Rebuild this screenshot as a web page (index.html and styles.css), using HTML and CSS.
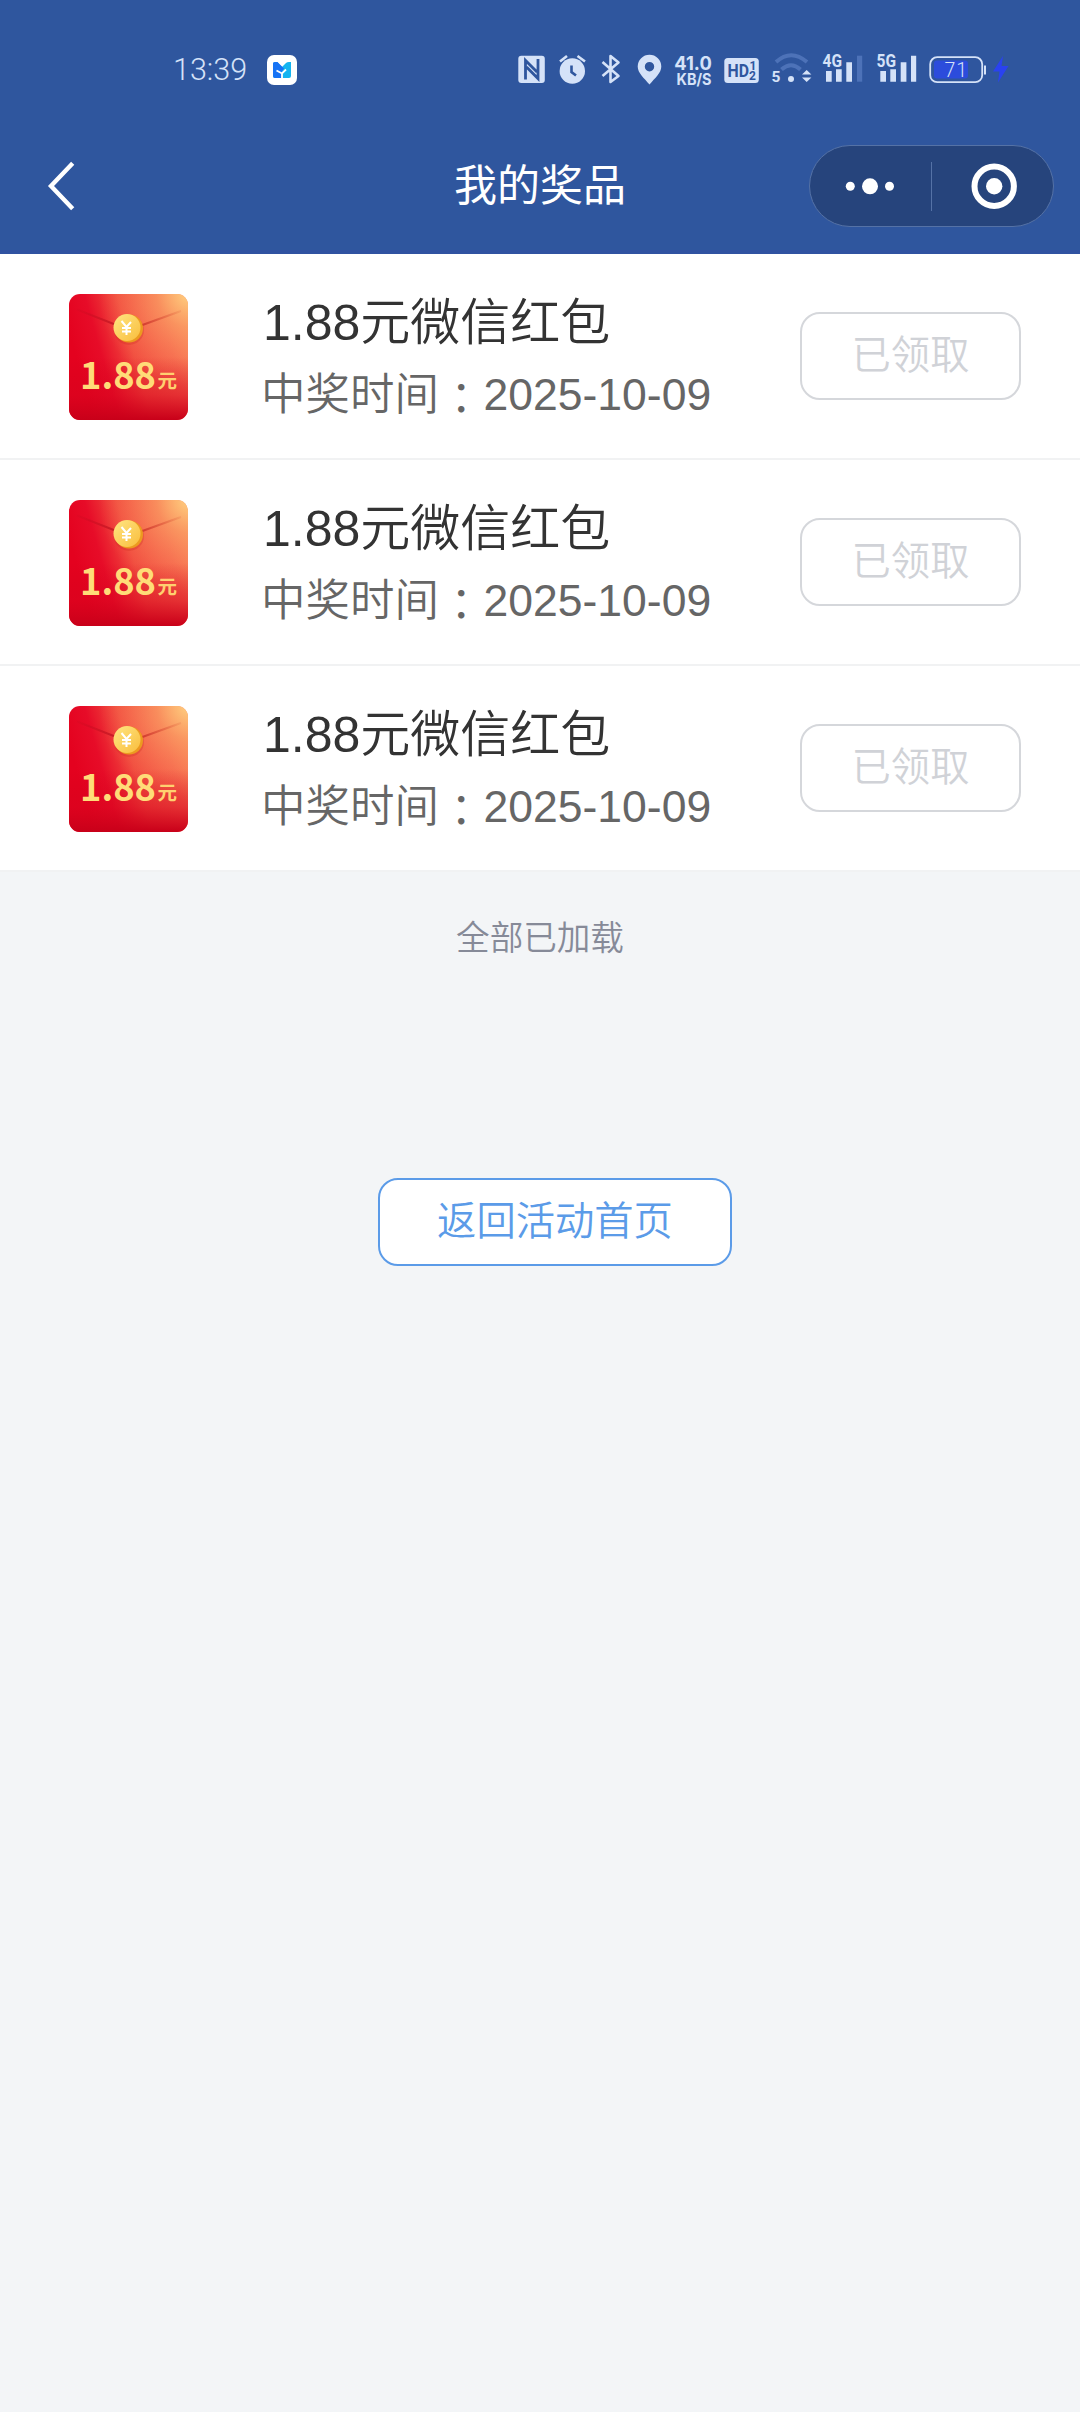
FILE: index.html
```html
<!DOCTYPE html>
<html lang="zh-CN">
<head>
<meta charset="utf-8">
<title>我的奖品</title>
<link rel="stylesheet" href="styles.css">
</head>
<body>
<svg width="0" height="0" class="defs" aria-hidden="true">
  <defs>
    <linearGradient id="paper" x1="0" y1="0.3" x2="1" y2="0">
      <stop offset="0" stop-color="#e4021f"/><stop offset="0.2" stop-color="#e70c28"/><stop offset="0.45" stop-color="#f04a3e"/><stop offset="0.75" stop-color="#f4604a"/><stop offset="1" stop-color="#f88458"/>
    </linearGradient>
    <radialGradient id="glow" cx="1" cy="0" r="0.75">
      <stop offset="0" stop-color="#ffcf80"/><stop offset="0.35" stop-color="#fdb26c" stop-opacity="0.55"/><stop offset="1" stop-color="#ff9060" stop-opacity="0"/>
    </radialGradient>
    <linearGradient id="base" x1="0" y1="0" x2="0" y2="1">
      <stop offset="0.5" stop-color="#d00018" stop-opacity="0"/><stop offset="0.8" stop-color="#d6031d" stop-opacity="0.5"/><stop offset="1" stop-color="#c80019"/>
    </linearGradient>
    <linearGradient id="foldL" x1="0" y1="0" x2="1" y2="0">
      <stop offset="0" stop-color="#b80c1c" stop-opacity="0.1"/><stop offset="1" stop-color="#b80c1c" stop-opacity="0.7"/>
    </linearGradient>
    <linearGradient id="foldR" x1="1" y1="0" x2="0" y2="0">
      <stop offset="0" stop-color="#d85030" stop-opacity="0.15"/><stop offset="1" stop-color="#c82c28" stop-opacity="0.8"/>
    </linearGradient>
    <linearGradient id="coin" x1="0" y1="0" x2="1" y2="1">
      <stop offset="0" stop-color="#ffe683"/><stop offset="1" stop-color="#f9bd3c"/>
    </linearGradient>
    <symbol id="envelope" viewBox="0 0 119 126">
      <rect width="119" height="126" rx="11" fill="url(#paper)"/>
      <rect width="119" height="126" rx="11" fill="url(#glow)"/>
      <rect width="119" height="126" rx="11" fill="url(#base)"/>
      <path d="M8 15.500 L46 30.500" fill="none" stroke="url(#foldL)" stroke-width="2"/>
      <path d="M112 17 L72 31.500" fill="none" stroke="url(#foldR)" stroke-width="2"/>
      <circle cx="60" cy="36" r="15" fill="#cc2e22" opacity="0.3"/>
      <circle cx="60" cy="34.500" r="14" fill="#ec9a20"/>
      <circle cx="58" cy="33.500" r="13.500" fill="url(#coin)"/>
      <path d="M52.500 27 L57.500 33 L62 28 M57.500 33 V41 M53 34 H62 M53 37.500 H62" fill="none" stroke="#fff" stroke-width="2"/>
      <text x="11" y="94.500" class="env-num" textLength="76" lengthAdjust="spacingAndGlyphs">1.88</text>
      <text x="88.500" y="93.500" class="env-unit">元</text>
    </symbol>
  </defs>
</svg>

<header class="header">
  <div class="status">
    <span class="clock">13:39</span>
    <svg class="app" width="30" height="30" viewBox="0 0 30 30">
      <rect width="30" height="30" rx="7" fill="#fff"/>
      <path d="M6 8.500 Q6 7 8 7 H10 L15 12 L19 8 Q20 7 22 7 H24 V21 Q24 23 22 23 H19 L15 23 H8 Q6 23 6 21 Z" fill="#14b4f0"/>
      <path d="M6 8.500 Q6 7 8 7 H10.500 L17 13.500 L14.500 17 V23 H8 Q6 23 6 21 Z" fill="#1673f5"/>
      <path d="M9.500 15.500 L15 18.500 L19 14.500 M15 18 V23.500" fill="none" stroke="#fff" stroke-width="1.800"/>
    </svg>
    <div class="icons">
      <svg width="38" height="40" viewBox="516 50 38 40">
        <rect x="518.300" y="55.700" width="26.500" height="27.300" rx="3" fill="#d5e2f8"/>
        <path d="M525.500 79.500 V60.500 L537 72 M526.500 67 L538 78.500 V59" fill="none" stroke="#2f569e" stroke-width="2.800"/>
      </svg>
      <svg width="42" height="40" viewBox="554 50 42 40">
        <circle cx="572.300" cy="71" r="12.700" fill="#d5e2f8"/>
        <path d="M560 61.500 L567 56 M577.500 56 L585 61.500" stroke="#d5e2f8" stroke-width="2.600"/>
        <path d="M571.500 65.500 V72 L576 75.500" fill="none" stroke="#2f569e" stroke-width="2.600"/>
      </svg>
      <svg width="36" height="40" viewBox="596 50 36 40">
        <path d="M602.500 62 L618.500 76 L610.500 82 V56 L618.500 62.500 L602.500 76" fill="none" stroke="#d5e2f8" stroke-width="2.600" stroke-linejoin="round"/>
      </svg>
      <svg width="38" height="40" viewBox="632 50 38 40">
        <path fill-rule="evenodd" d="M649.500 84.500 C644 78 637.700 73 637.700 66.500 A11.800 11.800 0 0 1 661.300 66.500 C661.300 73 655 78 649.500 84.500 Z M649.500 62 A4.700 4.700 0 1 0 649.500 71.400 A4.700 4.700 0 1 0 649.500 62 Z" fill="#d5e2f8"/>
      </svg>
      <svg width="48" height="40" viewBox="670 50 48 40">
        <text x="674.300" y="69.500" class="st st-speed" textLength="37.500" lengthAdjust="spacingAndGlyphs">41.0</text>
        <text x="676.500" y="85.300" class="st st-unit" textLength="35" lengthAdjust="spacingAndGlyphs">KB/S</text>
      </svg>
      <svg width="50" height="40" viewBox="718 50 50 40">
        <rect x="724.300" y="58" width="34.500" height="25" rx="3.500" fill="#d5e2f8"/>
        <text x="727.500" y="77.300" class="st st-hd" textLength="21.500" lengthAdjust="spacingAndGlyphs">HD</text>
        <text x="749.500" y="69.800" class="st st-sub">1</text>
        <text x="749" y="80" class="st st-sub">2</text>
      </svg>
      <svg width="50" height="40" viewBox="768 50 50 40">
        <g fill="none" stroke="#4d72b8" stroke-width="4">
          <path d="M776 62 Q791 48.500 807 62"/>
          <path d="M781.500 69.500 Q791 61 800.500 69.500"/>
        </g>
        <text x="771.500" y="82" class="st st-five">5</text>
        <circle cx="791" cy="79" r="3" fill="#d5e2f8"/>
        <path d="M802 74.500 L806.700 70 L811.400 74.500 Z M802 77.500 H811.400 L806.700 82 Z" fill="#d5e2f8"/>
      </svg>
      <svg width="52" height="40" viewBox="818 50 52 40">
        <path d="M826 71 h5.700 v10.700 h-5.700 Z M836 69.300 h5.700 v12.400 h-5.700 Z M846.300 62.300 h5.700 v19.400 h-5.700 Z" fill="#d5e2f8"/>
        <path d="M857 55.700 h5.200 v26 h-5.200 Z" fill="#4d72b8"/>
        <text x="822.500" y="67.300" class="st st-net" textLength="19.500" lengthAdjust="spacingAndGlyphs">4G</text>
      </svg>
      <svg width="54" height="40" viewBox="870 50 54 40">
        <path d="M880.300 71 h5.700 v10.700 h-5.700 Z M890.300 69.300 h5.700 v12.400 h-5.700 Z M900.700 62.300 h5.700 v19.400 h-5.700 Z M911 55.700 h5.200 v26 h-5.200 Z" fill="#d5e2f8"/>
        <text x="876.500" y="67.300" class="st st-net" textLength="19.500" lengthAdjust="spacingAndGlyphs">5G</text>
      </svg>
      <svg width="66" height="40" viewBox="924 50 66 40">
        <rect x="934" y="60.500" width="34" height="18" rx="3" fill="#2c4cdc"/>
        <rect x="930.200" y="57.200" width="52" height="25" rx="7" fill="none" stroke="#d5e2f8" stroke-width="1.800"/>
        <path d="M984 65.500 H986 V74.500 H984 Z" fill="#d5e2f8"/>
        <text x="944.500" y="77" class="st st-bat" textLength="22.500">71</text>
      </svg>
      <svg width="24" height="40" viewBox="990 50 24 40">
        <path d="M1003 56 L993 71.500 H999.500 L998 82.500 L1008.500 66 H1001.500 Z" fill="#2a42f0"/>
      </svg>
    </div>
  </div>
  <div class="nav">
    <svg class="back" width="40" height="56" viewBox="0 0 40 56"><path d="M28.700 5.300 L7 28 L28.700 50.700" fill="none" stroke="#fff" stroke-width="4.400"/></svg>
    <h1 class="title">我的奖品</h1>
    <div class="capsule">
      <svg width="121" height="50" viewBox="0 0 121 50"><g fill="#fff"><circle cx="40.300" cy="25.300" r="4.500"/><circle cx="60" cy="25.300" r="8"/><circle cx="79.500" cy="25.300" r="4.500"/></g></svg>
      <span class="divider"></span>
      <svg width="121" height="50" viewBox="0 0 121 50"><circle cx="62.200" cy="25.300" r="19.700" fill="none" stroke="#fff" stroke-width="6"/><circle cx="62.200" cy="25.300" r="8.200" fill="#fff"/></svg>
    </div>
  </div>
</header>

<main>
  <ul class="list">
    <li class="row">
      <svg class="thumb" width="119" height="126"><use href="#envelope"/></svg>
      <div class="info"><div class="name">1.88元微信红包</div><div class="time">中奖时间<span class="colon" lang="zh-TW">：</span>2025-10-09</div></div>
      <button class="btn done">已领取</button>
    </li>
    <li class="row">
      <svg class="thumb" width="119" height="126"><use href="#envelope"/></svg>
      <div class="info"><div class="name">1.88元微信红包</div><div class="time">中奖时间<span class="colon" lang="zh-TW">：</span>2025-10-09</div></div>
      <button class="btn done">已领取</button>
    </li>
    <li class="row">
      <svg class="thumb" width="119" height="126"><use href="#envelope"/></svg>
      <div class="info"><div class="name">1.88元微信红包</div><div class="time">中奖时间<span class="colon" lang="zh-TW">：</span>2025-10-09</div></div>
      <button class="btn done">已领取</button>
    </li>
  </ul>
  <p class="loaded">全部已加载</p>
  <button class="btn home">返回活动首页</button>
</main>
</body>
</html>
```
FILE: styles.css
```css
* { box-sizing: border-box; margin: 0; padding: 0; }
body {
  min-height: 2412px;
  background: #f3f5f7;
  font-family: "Liberation Sans", "Noto Sans CJK SC", sans-serif;
  font-weight: 350;
  color: #333;
}
svg { display: block; flex: none; }
.defs { position: absolute; }

.header { height: 254px; background: #2f569e; border-bottom: 4px solid #3052a1; }
.status { display: flex; height: 140px; padding-left: 173px; align-items: center; }
.clock { width: 94px; font: 300 30.500px/40px Roboto, sans-serif; color: #d5e2f8; }
.icons { display: flex; margin-left: 219px; }
.st { font-family: Roboto, sans-serif; font-weight: 700; fill: #d5e2f8; }
.st-speed { font: 700 19px Inter, sans-serif; }
.st-unit { font: 700 15.500px Inter, sans-serif; }
.st-hd { font-size: 19px; fill: #2f569e; }
.st-sub { font-size: 12px; fill: #2f569e; }
.st-five { font-size: 15.500px; }
.st-net { font-size: 18.500px; }
.st-bat { font-size: 19.500px; font-weight: 300; }

.nav { display: grid; grid-template-columns: 300px 1fr 300px; height: 92px; align-items: center; padding-right: 26px; }
.back { margin-left: 44px; }
.title { padding-left: 26px; text-align: center; font-size: 43px; font-weight: 400; line-height: 60px; color: #fff; }
.capsule {
  display: flex; justify-self: end; align-items: center;
  width: 245px; height: 82px; border: 1px solid #5572a6; border-radius: 41px; background: #26447c;
}
.divider { width: 1px; height: 49px; background: #5572a6; }

.list { list-style: none; background: #fff; }
.row { display: flex; height: 206px; padding-left: 69px; border-bottom: 2px solid #f1f2f3; }
.thumb { margin-top: 40px; }
.info { width: 539px; margin-left: 73px; padding-top: 33px; white-space: nowrap; }
.name { padding-left: 2px; font-size: 50px; line-height: 72px; }
.time { font-size: 44.500px; line-height: 72px; color: #666; }
.colon { display: inline-block; font-family: "Noto Sans CJK TC", sans-serif; line-height: 1; transform: translateY(5px); }
.btn {
  display: block; height: 88px; border: 2px solid #d5d7db; border-radius: 20px; background: #fff;
  font: 350 39.300px/76px "Noto Sans CJK SC", sans-serif; padding-bottom: 8px;
}
.done { width: 221px; margin-top: 58px; color: #d0d2d7; }
.home { width: 354px; margin: 219px 0 0 378px; border-color: #5b9be8; color: #5b9be8; }
.loaded { padding-top: 42px; text-align: center; font-size: 33.600px; line-height: 50px; color: #868a98; height: 87px; }
.env-num { font: 700 36px "Noto Sans CJK SC", sans-serif; fill: #ffdc78; }
.env-unit { font: 700 19.500px "Noto Sans CJK SC", sans-serif; fill: #ffd070; }
```
